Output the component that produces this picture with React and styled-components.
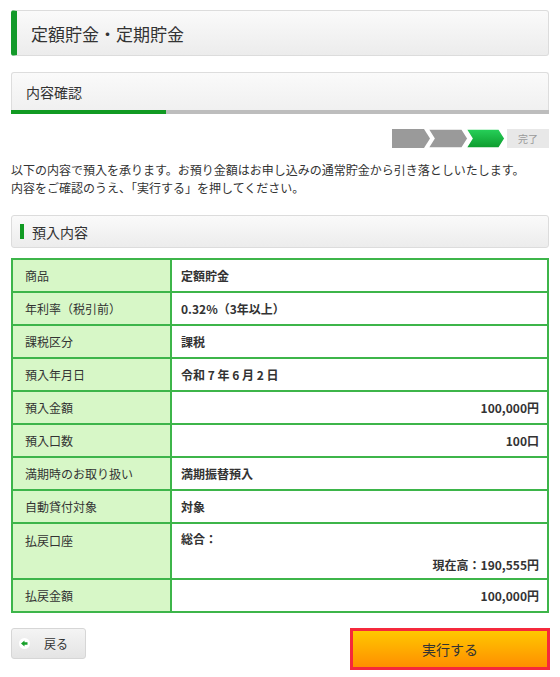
import React from 'react'
import styled, { createGlobalStyle } from 'styled-components'

const GlobalStyle = createGlobalStyle`
  html, body {
    margin: 0;
    padding: 0;
    background: #fff;
  }
  body {
    font-family: "Noto Sans CJK JP", "Noto Sans", sans-serif;
    color: #333;
  }
`

const Page = styled.div`
  width: 538px;
  padding: 10px 11px 0;
`

const TitleBar = styled.div`
  height: 44px;
  display: flex;
  align-items: center;
  padding-left: 14px;
  border: 1px solid #dcdcdc;
  border-left: 6px solid #139a2a;
  border-radius: 3px;
  background: linear-gradient(#fafafa, #ececec);
  font-size: 17px;
  color: #333;
`

const StepBox = styled.div`
  margin-top: 16px;
  border: 1px solid #ddd;
  border-bottom: none;
  border-radius: 3px 3px 0 0;
  background: linear-gradient(#fafafa, #efefef);
`

const StepLabel = styled.div`
  height: 37px;
  display: flex;
  align-items: center;
  padding-left: 14px;
  font-size: 14px;
`

const ProgressBar = styled.div`
  height: 4px;
  background: #bdbdbd;
  margin: 0 -1px;
  div {
    height: 100%;
    background: #119a22;
  }
`

const Steps = styled.div`
  margin-top: 15px;
  display: flex;
  justify-content: flex-end;
  align-items: center;
  gap: 1px;
`

const Done = styled.span`
  width: 42px;
  height: 19px;
  display: flex;
  align-items: center;
  justify-content: center;
  background: #e8e8e8;
  color: #9a9a9a;
  font-size: 10px;
`

const Lead = styled.p`
  margin: 13px 0 0;
  font-size: 12px;
  line-height: 18px;
`

const SectionHead = styled.div`
  margin-top: 18px;
  height: 31px;
  display: flex;
  align-items: center;
  gap: 8px;
  padding-left: 8px;
  border: 1px solid #dcdcdc;
  border-radius: 3px;
  background: linear-gradient(#fafafa, #ececec);
  font-size: 14px;
  &::before {
    content: '';
    width: 4px;
    height: 15px;
    background: #109a22;
  }
`

const Table = styled.table`
  margin-top: 10px;
  width: 100%;
  border-collapse: collapse;
  font-size: 12px;
  td {
    border: 2px solid #3db54a;
    padding: 0 8px 0 12px;
    height: 31px;
  }
`

const Label = styled.td`
  width: 137px;
  background: #d7f7c7;
  vertical-align: ${p => (p.$top ? 'top' : 'middle')};
  padding-top: ${p => (p.$top ? '8px' : '0')} !important;
`

const Value = styled.td`
  font-weight: bold;
  text-align: ${p => (p.$right ? 'right' : 'left')};
  padding-left: 9px !important;
`

const AccountCell = styled.td`
  font-weight: bold;
  height: 43px !important;
  padding: 6px 8px 5px 9px !important;
  div {
    display: flex;
    flex-direction: column;
    justify-content: space-between;
    height: 100%;
    min-height: 43px;
  }
  span:last-child {
    text-align: right;
  }
`

const Buttons = styled.div`
  margin-top: 15px;
  display: flex;
  justify-content: space-between;
  align-items: flex-start;
`

const BackButton = styled.button`
  width: 75px;
  height: 31px;
  display: flex;
  align-items: center;
  gap: 14px;
  padding: 0 0 0 7px;
  border: 1px solid #d6d6d6;
  border-radius: 3px;
  background: linear-gradient(#f4f4f4, #e4e4e4);
  font-family: inherit;
  font-size: 12px;
  color: #333;
`

const RunButton = styled.button`
  width: 200px;
  height: 42px;
  margin-right: -1px;
  border: 3px solid #f5293c;
  background: linear-gradient(#ffc800, #ff8f00);
  font-family: inherit;
  font-size: 14px;
  color: #333;
`

const Arrows = () => (
  <svg width="114" height="19" viewBox="0 0 114 19">
    <defs>
      <linearGradient id="g" x1="0" y1="0" x2="0" y2="1">
        <stop offset="0" stopColor="#27d15a" />
        <stop offset="1" stopColor="#0c9a2c" />
      </linearGradient>
    </defs>
    <polygon points="0,0 32,0 38,9.5 32,19 0,19" fill="#9a9a9a" />
    <polygon points="36,0 70,0 76,9.5 70,19 36,19 42,9.5" fill="#9a9a9a" stroke="#fff" strokeWidth="1.5" />
    <polygon points="74,0 107,0 113,9.5 107,19 74,19 80,9.5" fill="url(#g)" stroke="#fff" strokeWidth="1.5" />
  </svg>
)

const BackIcon = () => (
  <svg width="11" height="11" viewBox="0 0 11 11">
    <circle cx="5.5" cy="5.5" r="5.5" fill="#fff" />
    <polygon points="2,5.5 5.5,2.5 5.5,4.3 8.5,4.3 8.5,6.7 5.5,6.7 5.5,8.5" fill="#16a02a" />
  </svg>
)

const rows = [
  ['商品', '定額貯金'],
  ['年利率（税引前）', '0.32%（3年以上）'],
  ['課税区分', '課税'],
  ['預入年月日', '令和 7 年 6 月 2 日'],
  ['預入金額', '100,000円', true],
  ['預入口数', '100口', true],
  ['満期時のお取り扱い', '満期振替預入'],
  ['自動貸付対象', '対象'],
]

export default function App() {
  return (
    <Page>
      <GlobalStyle />
      <TitleBar>定額貯金・定期貯金</TitleBar>

      <StepBox>
        <StepLabel>内容確認</StepLabel>
        <ProgressBar>
          <div style={{ width: `${(3 / 10.4) * 100}%` }} />
        </ProgressBar>
      </StepBox>

      <Steps>
        <Arrows />
        <Done>完了</Done>
      </Steps>

      <Lead>
        以下の内容で預入を承ります。お預り金額はお申し込みの通常貯金から引き落としいたします。
        <br />
        内容をご確認のうえ、「実行する」を押してください。
      </Lead>

      <SectionHead>預入内容</SectionHead>

      <Table>
        <tbody>
          {rows.map(([label, value, right]) => (
            <tr key={label}>
              <Label>{label}</Label>
              <Value $right={right}>{value}</Value>
            </tr>
          ))}
          <tr>
            <Label $top>払戻口座</Label>
            <AccountCell>
              <div>
                <span>総合：</span>
                <span>現在高：190,555円</span>
              </div>
            </AccountCell>
          </tr>
          <tr>
            <Label>払戻金額</Label>
            <Value $right>100,000円</Value>
          </tr>
        </tbody>
      </Table>

      <Buttons>
        <BackButton>
          <BackIcon />
          戻る
        </BackButton>
        <RunButton>実行する</RunButton>
      </Buttons>
    </Page>
  )
}
